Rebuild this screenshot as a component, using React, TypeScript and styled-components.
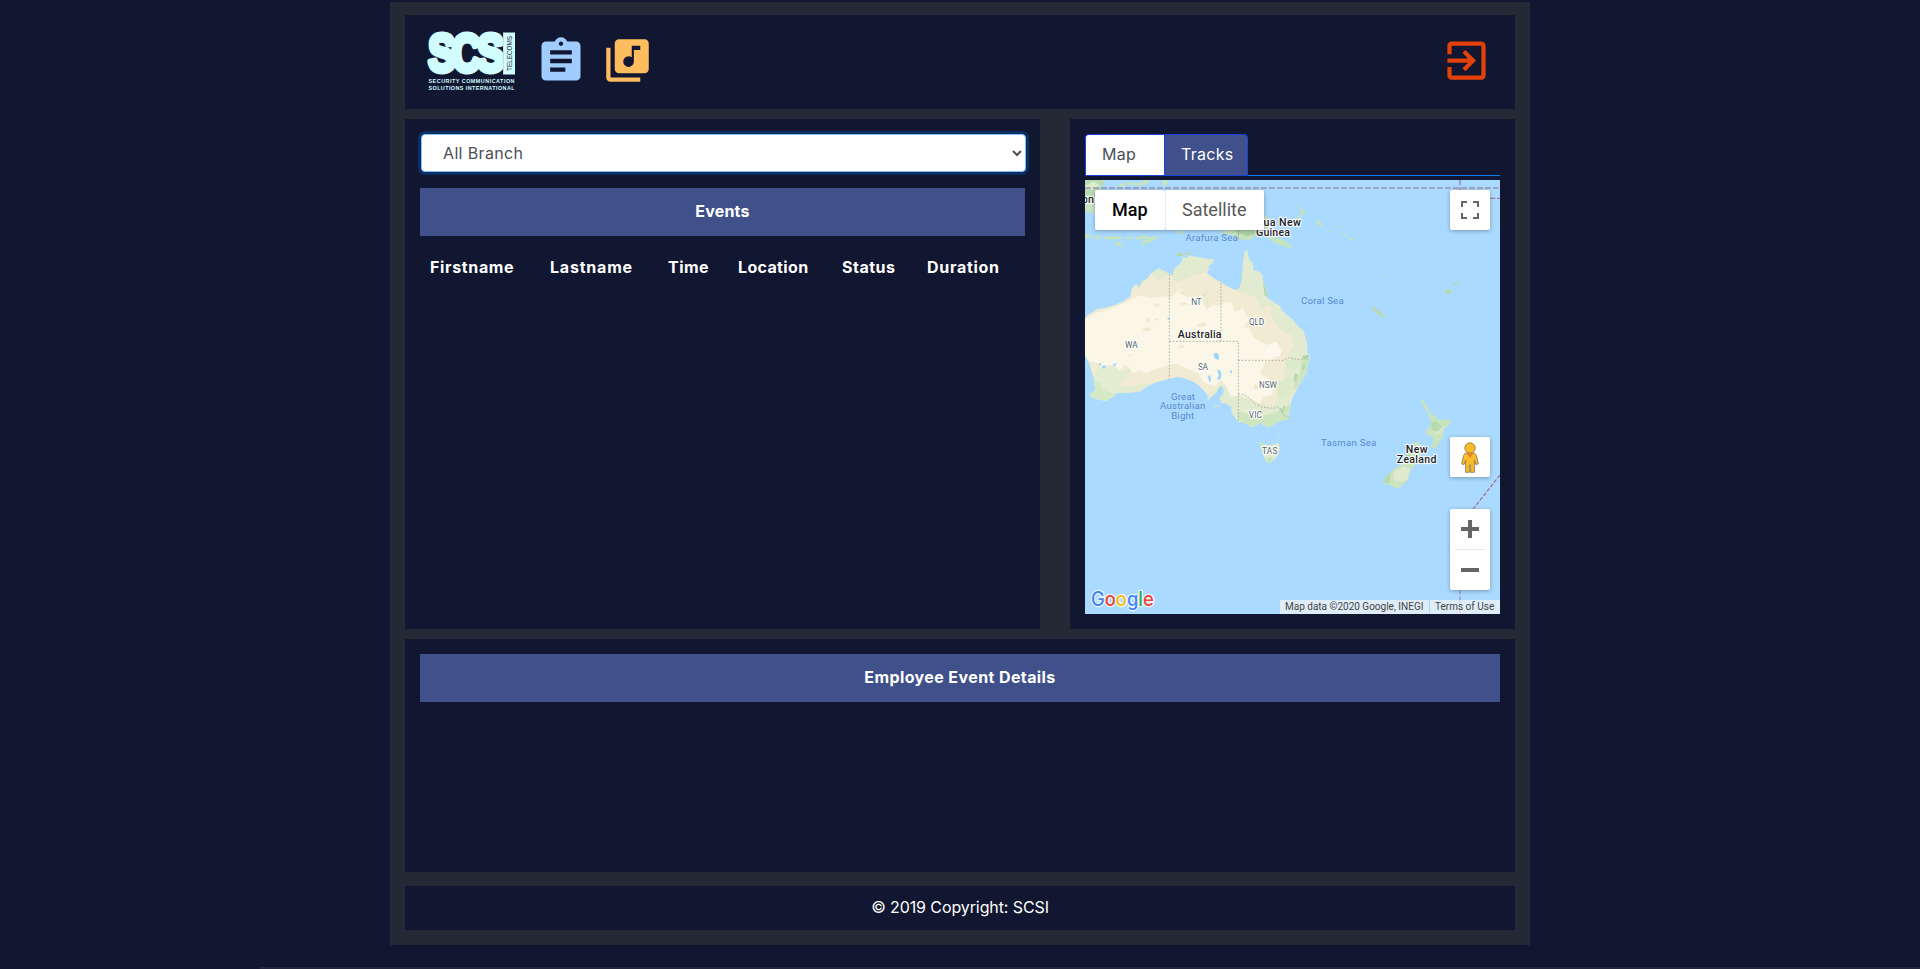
import React from 'react';
import styled, { createGlobalStyle } from 'styled-components';
import { MdAssignment, MdExitToApp, MdLibraryMusic } from 'react-icons/md';

const navy = '#111631';
const slate = '#242a35';
const indigo = '#40508a';

const GlobalStyle = createGlobalStyle`
  *, *::before, *::after { box-sizing: border-box; }
  body {
    margin: 0;
    background: ${navy};
    color: #fff;
    font-family: Inter, "Open Sans", sans-serif;
    font-size: 16px;
    line-height: 24px;
    overflow: hidden;
  }
`;

const Page = styled.div`
  display: flex;
  flex-direction: column;
  align-items: center;
  height: 969px;
  padding-top: 2px;
`;

const Shell = styled.main`
  display: flex;
  flex-direction: column;
  width: 1140px;
  height: 943px;
  padding: 13px 15px 15px;
  background: ${slate};
`;

const BottomStrip = styled.div`
  align-self: flex-end;
  width: 1660px;
  height: 2px;
  margin-top: auto;
  background: #23253f;
`;

const Header = styled.header`
  display: flex;
  align-items: flex-start;
  height: 94px;
  padding: 4px 23px 0 22px;
  background: ${navy};
`;

const IconLink = styled.a<{ $color: string; $gap: string }>`
  display: flex;
  margin: 16px 0 0 ${p => p.$gap};
  color: ${p => p.$color};
`;

const Columns = styled.div`
  display: grid;
  grid-template-columns: 635px 445px;
  justify-content: space-between;
  height: 510px;
  margin: 10px 0;
`;

const Panel = styled.section`
  background: ${navy};
  padding: 15px;
`;

const BranchSelect = styled.select`
  display: block;
  width: 605px;
  height: 38px;
  margin: 0 0 16px 1px;
  padding: 6px 1px 6px 17px;
  border: 1px solid #80bdff;
  border-radius: 4px;
  background: #fff;
  color: #495057;
  font: 400 16px/24px Inter, sans-serif;
  letter-spacing: 0.35px;
  outline: 0;
  box-shadow: 0 0 0 3px #0b2e63;
`;

const Banner = styled.h2<{ $tracking?: string }>`
  height: 48px;
  margin: 0;
  background: ${indigo};
  font-size: 16px;
  font-weight: 700;
  line-height: 47px;
  text-align: center;
  letter-spacing: ${p => p.$tracking ?? '0.2px'};
`;

const EventTable = styled.div`
  display: grid;
  grid-template-columns: 120px 118px 70px 104px 85px 108px;
  padding: 19px 0 0 10px;
`;

const HeadCell = styled.span<{ $tracking: string }>`
  font-weight: 700;
  letter-spacing: ${p => p.$tracking};
`;

const Tabs = styled.div`
  display: flex;
  height: 42px;
  margin-bottom: 4px;
  border-bottom: 1px solid #1479f0;
`;

const Tab = styled.button<{ $active?: boolean }>`
  width: ${p => (p.$active ? '84px' : '79px')};
  height: 42px;
  padding: 0 0 2px 16px;
  border: 1px solid #1d41dc;
  border-right-width: ${p => (p.$active ? '1px' : '0')};
  border-radius: ${p => (p.$active ? '0 4px 0 0' : '4px 0 0 0')};
  background: ${p => (p.$active ? indigo : '#fff')};
  color: ${p => (p.$active ? '#fff' : '#495057')};
  font: 400 16px/24px Inter, sans-serif;
  letter-spacing: 0.3px;
  text-align: left;
`;

const MapFrame = styled.div`
  position: relative;
  height: 434px;
  overflow: hidden;
  font-family: Roboto, sans-serif;
`;

const MapDrawing = styled.svg`
  display: block;
  width: 415px;
  height: 434px;
`;

const MapCard = styled.div<{ $top: number; $height?: number }>`
  position: absolute;
  top: ${p => p.$top}px;
  right: 10px;
  display: flex;
  flex-direction: column;
  align-items: center;
  justify-content: center;
  width: 40px;
  height: ${p => p.$height ?? 40}px;
  border-radius: 2px;
  background: #fff;
  color: #666;
  box-shadow: 0 1px 4px rgba(0, 0, 0, 0.3);
`;

const MapTypes = styled.div`
  position: absolute;
  top: 10px;
  left: 10px;
  display: flex;
  border-radius: 2px;
  box-shadow: 0 1px 4px rgba(0, 0, 0, 0.3);
`;

const MapType = styled.span<{ $selected?: boolean }>`
  width: ${p => (p.$selected ? '70px' : '99px')};
  height: 40px;
  padding-left: ${p => (p.$selected ? '17px' : '16px')};
  border-left: ${p => (p.$selected ? '0' : '1px solid #ebebeb')};
  border-radius: 2px;
  background: #fff;
  color: ${p => (p.$selected ? '#000' : '#565656')};
  font-size: 18px;
  font-weight: ${p => (p.$selected ? 500 : 400)};
  line-height: 39px;
`;

const Attribution = styled.div`
  position: absolute;
  right: 0;
  bottom: 0;
  display: flex;
  gap: 1px;
  color: #444;
  font-size: 10px;
  line-height: 14px;
`;

const Credit = styled.span<{ $width: number }>`
  width: ${p => p.$width}px;
  height: 14px;
  padding-left: 5px;
  background: rgba(245, 245, 245, 0.7);
  white-space: nowrap;
`;

const Details = styled(Panel)`
  height: 233px;
`;

const Footer = styled.footer`
  height: 44px;
  margin-top: 14px;
  background: ${navy};
  line-height: 43px;
  letter-spacing: -0.1px;
  text-align: center;
`;

const Logo = () => (
  <svg width="90" height="80" viewBox="0 -14 90 80" aria-label="SCSI Telecoms">
    <g fill="#d2fdff" fontFamily="Liberation Sans, sans-serif" fontWeight="700">
      <text
        transform="translate(1.5 38.3) scale(0.79 1)"
        fontSize="51"
        stroke="#d2fdff"
        strokeWidth="6"
        strokeLinejoin="round"
        letterSpacing="-4.5"
      >
        SCS
      </text>
      <rect x="76" y="-0.5" width="12" height="42" />
      <text x="1.5" y="50.2" fontSize="5.4" textLength="86">SECURITY COMMUNICATION</text>
      <text x="1.5" y="56.8" fontSize="5.4" textLength="86">SOLUTIONS INTERNATIONAL</text>
    </g>
    <path d="M76.3 0v41" stroke={navy} strokeOpacity="0.25" strokeWidth="0.6" />
    <text
      transform="translate(85.2 38) rotate(-90)"
      fill={navy}
      fontFamily="Liberation Sans, sans-serif"
      fontSize="7.4"
      textLength="35"
      lengthAdjust="spacingAndGlyphs"
    >
      TELECOMS
    </text>
  </svg>
);

const AUSTRALIA =
  'M15 268L22 255 40 245 50 237 76 234 105 226 133 213 152 198 155 180 165 164 172 162 176 172 188 152 200 147 208 135 222 124 236 115 248 121 262 127 270 133 280 135 279 124 288 110 300 102 308 88 305 80 322 84 327 76 345 80 370 84 390 88 402 86 398 100 385 108 388 118 380 128 400 145 424 157 440 168 455 176 468 180 478 175 485 150 487 115 490 90 494 65 499 60 504 68 508 90 518 100 522 122 535 122 548 135 550 160 558 175 563 205 580 215 600 228 605 240 625 258 640 270 655 290 670 302 676 320 682 345 682 368 689 378 689 388 683 405 680 430 670 445 655 470 648 485 638 500 632 525 628 548 625 568 600 573 580 585 565 593 550 585 541 577 528 587 515 592 500 582 475 575 462 560 455 548 454 530 435 520 425 520 418 505 430 490 430 475 422 468 410 488 395 500 385 510 380 492 368 478 355 465 335 452 310 443 290 441 268 446 230 456 200 470 180 485 150 488 110 489 95 505 75 513 50 508 35 502 30 492 45 480 42 450 35 425 28 400 18 385 15 375Z';

const CREAM =
  'M15 268L45 250 90 238 130 220 160 205 180 196 210 204 255 199 272 204 290 190 292 176 320 184 345 176 350 190 375 196 367 210 378 240 400 225 425 227 430 214 455 220 465 245 490 235 496 250 508 270 490 290 510 296 520 320 560 345 590 335 600 360 585 385 557 395 540 430 580 455 578 490 550 500 540 520 510 505 480 495 450 500 440 470 422 450 404 470 370 455 355 428 330 420 310 410 285 400 250 410 220 420 200 430 175 420 160 430 145 410 130 405 120 420 90 405 65 415 55 400 30 395 15 375Z';

type LabelProps = {
  x: number;
  y: number;
  w: number;
  children: string;
  tone?: 'state' | 'country' | 'sea';
};

const Label = ({ x, y, w, children, tone = 'state' }: LabelProps) => (
  <text
    x={x}
    y={y}
    textLength={w}
    textAnchor="middle"
    fontSize={tone === 'country' ? 32 : tone === 'sea' ? 29 : 25}
    fontWeight={tone === 'country' ? 500 : 400}
    fill={tone === 'country' ? '#1f2226' : tone === 'sea' ? '#5b88cd' : '#53646a'}
    stroke={tone === 'sea' ? 'none' : '#fff'}
    strokeOpacity="0.85"
    strokeWidth={tone === 'sea' ? 0 : 7}
    strokeLinejoin="round"
    paintOrder="stroke"
  >
    {children}
  </text>
);

const OceaniaMap = () => (
  <MapDrawing viewBox="0 0 1245 1302" fontFamily="Roboto, sans-serif">
    <defs>
      <clipPath id="mainland">
        <path d={AUSTRALIA} />
      </clipPath>
    </defs>
    <rect width="1245" height="1302" fill="#aadaff" />

    {/* Indonesia and New Guinea */}
    <g transform="translate(-15 -30)" fill="#c5e3bd">
      <path d="M15 30L68 30 76 42 60 50 66 66 45 84 40 95 15 100Z" fill="#b7dbb3" />
      <path d="M15 55L40 60 60 46 40 34 15 48Z" fill="#dcebcb" />
      <path d="M15 100L40 95 45 120 38 132 25 125 15 128Z" fill="#c8e4bf" />
      <path d="M112 53L118 42 150 37 175 40 196 30 210 32 200 43 170 47 145 43 128 50ZM245 30L262 30 263 42 253 50 248 44Z" />
      <path d="M15 190L32 195 30 204 15 202ZM36 200L60 197 58 206 38 206ZM70 204L100 197 128 202 122 208 92 208 74 209ZM98 214L118 216 129 228 120 231 108 222ZM135 202L158 199 156 207 140 206ZM165 203L190 196 213 203 232 197 238 201 218 209 190 206 168 209ZM183 226L190 212 215 203 237 200 224 211 200 220ZM290 186L306 180 312 189 300 192Z" />
      <path d="M420 188L445 176 550 170 553 135 568 145 580 158 570 178 568 192 590 205 615 212 637 230 638 234 605 228 580 216 565 198 535 190 510 211 478 208 455 195Z" />
      <path d="M455 180L520 178 535 190 500 200Z" fill="#b2d5a8" />
      <path d="M640 98L654 106 670 120 678 130 672 134 664 124 657 112ZM637 148L655 144 662 124 668 132 660 150 640 158ZM708 149L719 154 728 168 720 170 711 159ZM748 181L756 183 757 187 750 186ZM765 168L781 171 780 174 767 172ZM782 190L802 195 804 198 786 195ZM806 205L816 202 820 214 810 211ZM824 231L833 234 835 238 827 235Z" />
      <path d="M475 178V211" fill="none" stroke="#a8a9a0" strokeWidth="3" strokeDasharray="8 3" />
    </g>

    {/* Coral Sea islands */}
    <g transform="translate(-135 -210)" fill="#b9d8a9">
      <path d="M989 587L1004 593 1036 619 1037 625 1022 618 1003 604ZM1032 493L1043 496 1039 502ZM1041 511L1048 515 1046 518ZM1215 541L1228 536 1237 545 1228 551 1218 549ZM1238 521L1254 515 1258 519 1245 526Z" />
      <path d="M408 434L417 428 430 430 428 437 411 438ZM435 429L445 425 455 435 440 435Z" />
    </g>

    {/* Australian mainland */}
    <g transform="translate(-15 150)">
      <path d={AUSTRALIA} fill="#e2ebcf" />
      <g clipPath="url(#mainland)">
        <path d="M15 255L130 210 158 165 178 172 215 130 232 151 270 132 290 158 330 140 380 125 425 160 468 181 500 192 525 200 550 240 560 225 580 235 568 248 580 270 600 300 635 315 640 345 625 375 630 385 610 430 620 470 595 500 580 530 540 520 480 500 425 460 392 500 350 460 290 446 180 465 100 470 42 440 15 375Z" fill="#f0ebd2" />
        <path d={CREAM} fill="#fbf7e8" />
        <path d="M50 410L75 420 100 405 125 425 150 415 145 440 120 460 130 480 90 490 65 470 42 460Z" fill="#e4ecd1" />
        <path d="M42 448L62 460 65 480 90 487 105 492 85 513 55 508 30 497Z" fill="#d6e9c7" />
        <path d="M690 378L683 410 675 440 655 470 640 480 645 445 660 430 662 400 668 385ZM620 530L605 535 585 550 555 555 540 570 505 552 480 545 470 555 485 580 525 590 565 594 628 570 636 520Z" fill="#cde6bf" />
        <path d="M590 460L630 440 635 480 610 505 590 500ZM615 390L655 386 645 415 620 420Z" fill="#dce9c9" />
        <path d="M548 140L556 165 563 202 553 195ZM668 377L687 375 684 390 668 389ZM645 428L654 434 648 455 640 452ZM612 526L616 530 608 548 602 543ZM670 402L678 406 670 422 665 418Z" fill="#b8d8ae" />
        <path d="M198 267L213 262 208 278 198 274ZM225 264L239 268 236 272 225 271ZM351 284L372 276 380 283 376 290 351 291ZM188 296L205 292 216 297 205 304 189 302ZM140 375L158 372 150 382ZM292 350L310 344 314 353 297 354ZM520 468L528 460 536 476 525 480ZM215 225L235 221 245 226 228 231ZM300 220L316 215 323 223 306 226Z" fill="#f0ead1" />
        <path d="M568 350L590 336 604 362 599 380 580 376 564 386 548 372ZM548 480L574 474 576 493 556 500Z" fill="#fdf8ed" />
        <path d="M290 180L322 184 345 177 352 191 370 196 380 180 405 185 430 198 435 218 415 223 400 213 382 218 371 204 350 200 325 202 310 196Z" fill="#f0ead1" />
      </g>
      <path d="M401 371L411 369 417 376 416 389 408 388 402 382ZM411 419L420 421 425 434 421 447 411 450 416 435ZM384 438L391 436 393 454 387 455ZM450 423L456 419 455 429 451 431ZM57 400L62 399 64 406 59 407ZM65 408L77 406 77 413 67 416ZM100 402L109 399 106 408 101 409ZM262 264L269 262 269 268 264 269ZM369 194L376 191 374 197ZM415 477L421 471 419 489 412 493Z" fill="#9cd4fb" />
      <path d="M400 527L418 526 419 530 402 532ZM525 615L529 618 527 624ZM594 618L598 618 598 624 595 624Z" fill="#d7e6c0" />
      <path d="M538 636L553 643 570 646 583 643 596 639 600 655 595 674 582 690 568 700 556 690 547 667Z" fill="#e0ebd0" />
      <path d="M538 636L552 643 550 665 542 651ZM558 684L574 681 580 691 569 700Z" fill="#c7e3b9" />
      <g fill="none" stroke="#9ea19a" strokeOpacity=".8" strokeWidth="3" strokeDasharray="5 5">
        <path d="M268 134V446M268 334H475V575M423 159V334M475 391H610L625 383 645 387 660 390 687 375" />
        <path d="M475 492L492 494 505 502 525 522 548 532 580 535 597 530 610 552 625 565" />
      </g>
    </g>

    {/* New Zealand */}
    <g transform="translate(-15 480)">
      <path d="M1020 175L1034 187 1043 202 1049 217 1061 229 1064 218 1071 236 1080 241 1095 237 1113 239 1109 254 1091 268 1087 294 1070 320 1061 325 1052 319 1062 306 1056 292 1037 280 1035 273 1049 262 1051 237 1042 216 1030 198Z" fill="#c9e4bc" />
      <path d="M1049 250L1068 242 1086 260 1077 278 1061 273 1054 265Z" fill="#b8dab0" />
      <path d="M1058 274L1073 274 1085 263 1098 257 1089 268 1082 281 1066 286Z" fill="#d9e8c9" />
      <path d="M1003 312L1014 303 1023 322 1040 324 1020 346 1008 370 991 390 984 420 963 440 948 445 930 435 910 430 918 408 946 384 972 369 990 340Z" fill="#cde5bf" />
      <path d="M940 398L972 379 991 386 983 417 967 423 942 421Z" fill="#e1ead1" />
      <path d="M918 408L933 397 929 430 910 430ZM980 337L1000 325 990 350 975 365Z" fill="#b8d9ae" />
      <path d="M931 454L936 453 933 460ZM899 550L904 549 904 555Z" fill="#b3d4a0" />
    </g>

    {/* Date line and maritime boundaries */}
    <g fill="none" stroke="#9f91b3">
      <path d="M0 24H1245" strokeWidth="5" strokeDasharray="17 7" />
      <path d="M1125 0V33" strokeWidth="5" strokeDasharray="16 7" />
      <path d="M1215 55H1245" stroke="#a26986" strokeWidth="3" strokeDasharray="16 5" />
      <path d="M1245 885L1162 990" stroke="#a26986" strokeWidth="3.5" strokeDasharray="12 5" />
      <path d="M1125 1215V1302" strokeWidth="4" strokeDasharray="28 6" />
    </g>

    <Label x={9} y={68} w={36} tone="country">on</Label>
    <Label x={562} y={139} w={172} tone="country">Papua New</Label>
    <Label x={564} y={169} w={102} tone="country">Guinea</Label>
    <Label x={380} y={184} w={157} tone="sea">Arafura Sea</Label>
    <Label x={712} y={373} w={128} tone="sea">Coral Sea</Label>
    <Label x={334} y={375} w={31}>NT</Label>
    <Label x={515} y={434} w={46}>QLD</Label>
    <Label x={344} y={475} w={131} tone="country">Australia</Label>
    <Label x={139} y={504} w={38}>WA</Label>
    <Label x={354} y={570} w={30}>SA</Label>
    <Label x={549} y={624} w={54}>NSW</Label>
    <Label x={511} y={714} w={40}>VIC</Label>
    <Label x={554} y={822} w={46}>TAS</Label>
    <Label x={294} y={661} w={72} tone="sea">Great</Label>
    <Label x={293} y={688} w={136} tone="sea">Australian</Label>
    <Label x={293} y={717} w={69} tone="sea">Bight</Label>
    <Label x={791} y={799} w={166} tone="sea">Tasman Sea</Label>
    <Label x={995} y={820} w={66} tone="country">New</Label>
    <Label x={995} y={850} w={119} tone="country">Zealand</Label>

    <text
      x="18"
      y="1278"
      fontFamily="Inter, sans-serif"
      fontSize="59"
      fontWeight="500"
      textLength="188"
      lengthAdjust="spacingAndGlyphs"
      stroke="#e8f4ff"
      strokeWidth="8"
      strokeLinejoin="round"
      paintOrder="stroke"
    >
      <tspan fill="#4285f4">G</tspan>
      <tspan fill="#ea4335">o</tspan>
      <tspan fill="#fbbc05">o</tspan>
      <tspan fill="#4285f4">g</tspan>
      <tspan fill="#34a853">l</tspan>
      <tspan fill="#ea4335">e</tspan>
    </text>
  </MapDrawing>
);

const FullscreenIcon = () => (
  <svg width="18" height="18" viewBox="0 0 18 18" fill="#666">
    <path d="M0 0h6v2H2v4H0zM12 0h6v6h-2V2h-4zM0 12h2v4h4v2H0zM16 12h2v6h-6v-2h4z" />
  </svg>
);

const Pegman = () => (
  <svg width="18" height="31" viewBox="0 0 54 93" stroke="#8a7444" strokeWidth="2.5" fill="#fbbc2a" strokeLinejoin="round">
    <path d="M14 33H40L46 40 52 65 45 68 40 54V91H29V69H25V91H14V54L9 68 2 65 8 40Z" />
    <circle cx="27" cy="18" r="15.5" />
    <path d="M17 33H37L27 48Z" fill="#e5812a" stroke="none" />
  </svg>
);

const ZoomIcons = () => (
  <svg width="30" height="61" viewBox="0 0 30 61" fill="#666">
    <path d="M6 8h7V1h4v7h7v4h-7v7h-4v-7H6zM6 49h18v4H6z" />
    <path d="M0 30h30v1H0z" fill="#e6e6e6" />
  </svg>
);

const columns = [
  { name: 'Firstname', tracking: '0.65px' },
  { name: 'Lastname', tracking: '0.8px' },
  { name: 'Time', tracking: '0.5px' },
  { name: 'Location', tracking: '0.35px' },
  { name: 'Status', tracking: '0.5px' },
  { name: 'Duration', tracking: '0.7px' },
];

export default function App() {
  return (
    <Page>
      <GlobalStyle />
      <Shell>
        <Header>
          <Logo />
          <IconLink $color="#a0ccff" $gap="18px"><MdAssignment size={52} /></IconLink>
          <IconLink $color="#fdbd5f" $gap="15px"><MdLibraryMusic size={51} /></IconLink>
          <IconLink $color="#e2410a" $gap="auto"><MdExitToApp size={51} /></IconLink>
        </Header>
        <Columns>
          <Panel>
            <BranchSelect defaultValue="all">
              <option value="all">All Branch</option>
            </BranchSelect>
            <Banner>Events</Banner>
            <EventTable>
              {columns.map(c => (
                <HeadCell key={c.name} $tracking={c.tracking}>{c.name}</HeadCell>
              ))}
            </EventTable>
          </Panel>
          <Panel>
            <Tabs>
              <Tab>Map</Tab>
              <Tab $active>Tracks</Tab>
            </Tabs>
            <MapFrame>
              <OceaniaMap />
              <MapTypes>
                <MapType $selected>Map</MapType>
                <MapType>Satellite</MapType>
              </MapTypes>
              <MapCard $top={10}><FullscreenIcon /></MapCard>
              <MapCard $top={257}><Pegman /></MapCard>
              <MapCard $top={329} $height={81}><ZoomIcons /></MapCard>
              <Attribution>
                <Credit $width={149}>Map data ©2020 Google, INEGI</Credit>
                <Credit $width={70}>Terms of Use</Credit>
              </Attribution>
            </MapFrame>
          </Panel>
        </Columns>
        <Details>
          <Banner $tracking="0.4px">Employee Event Details</Banner>
        </Details>
        <Footer>© 2019 Copyright: SCSI</Footer>
      </Shell>
      <BottomStrip />
    </Page>
  );
}
